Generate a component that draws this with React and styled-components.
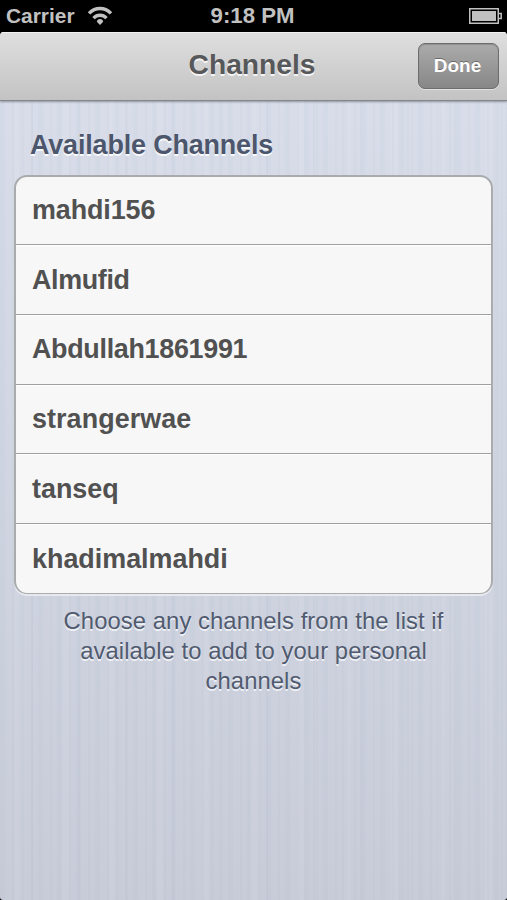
import React from "react";
import styled, { createGlobalStyle } from "styled-components";

const GlobalStyle = createGlobalStyle`
  * {
    box-sizing: border-box;
  }

  body {
    margin: 0;
    background: #000;
    font-family: "Liberation Sans", Arial, sans-serif;
  }
`;

const Screen = styled.div`
  height: 900px;
  overflow: hidden;
  background: #000;
`;

const StatusBar = styled.div`
  height: 32px;
  padding: 0 5px 0 6px;
  display: grid;
  grid-template-columns: 1fr auto 1fr;
  align-items: center;
  color: #c1c1c1;
`;

const StatusLeft = styled.div`
  display: flex;
  align-items: center;
  gap: 12px;
`;

const StatusText = styled.span`
  font-size: ${props => props.$size || "22.2px"};
  font-weight: bold;
  line-height: 32px;
  white-space: nowrap;
`;

const Time = styled(StatusText)`
  margin-right: 3px;
`;

const BatteryIcon = styled.svg`
  justify-self: end;
  margin-bottom: 1px;
`;

const Page = styled.div`
  height: 868px;
  border-radius: 4px 4px 3px 3px;
  overflow: hidden;
  background: repeating-linear-gradient(
      90deg,
      rgba(110, 125, 165, 0.03) 0 5px,
      transparent 5px 12px,
      rgba(110, 120, 150, 0.03) 12px 14px,
      transparent 14px 19px
    ),
    repeating-linear-gradient(
      90deg,
      transparent 0 15px,
      rgba(255, 255, 255, 0.05) 15px 22px,
      transparent 22px 31px,
      rgba(100, 115, 145, 0.03) 31px 33px,
      transparent 33px 47px
    ),
    linear-gradient(#d8dde9 68px, #d5dae6 200px, #ced3df 560px, #c8ccd8 868px);
`;

const NavBar = styled.div`
  position: relative;
  height: 69px;
  padding: 0 8px;
  display: grid;
  grid-template-columns: 1fr auto 1fr;
  align-items: center;
  background: linear-gradient(#dfdfdf, #c3c3c3);
  border-bottom: 1px solid #85868a;
  box-shadow: inset 0 1px 0 #f2f2f2, 0 1px 2px rgba(70, 75, 90, 0.5);
`;

const Title = styled.h1`
  grid-column: 2;
  margin: 0;
  padding: 0 3px 4px 0;
  font-size: 28.2px;
  line-height: 34px;
  color: #57585a;
  text-shadow: 0 1.5px 0 rgba(255, 255, 255, 0.8);
`;

const DoneButton = styled.button`
  justify-self: end;
  width: 81px;
  height: 46px;
  margin-bottom: 1px;
  padding: 1px 2px 0 0;
  border: 1.5px solid #6d6d6d;
  border-radius: 7px;
  background: linear-gradient(#ababab, #878787);
  box-shadow: inset 0 1px 1px rgba(80, 80, 80, 0.3), 0 1px 0 rgba(255, 255, 255, 0.45);
  color: #fff;
  font-family: inherit;
  font-size: 19px;
  font-weight: bold;
  text-shadow: 0 -1.5px 0 rgba(0, 0, 0, 0.35);
`;

const SectionTitle = styled.h2`
  margin: 0;
  padding: 28px 30px 0;
  height: 74px;
  font-size: 26.9px;
  line-height: 32px;
  letter-spacing: -0.14px;
  color: #4c566c;
  text-shadow: 0 1.5px 0 rgba(255, 255, 255, 0.85);
`;

const List = styled.ul`
  margin: 0 14px;
  padding: 0;
  height: 419px;
  display: flex;
  flex-direction: column;
  list-style: none;
  background: #f7f7f7;
  border: 2px solid #a9abad;
  border-bottom-width: 1px;
  border-radius: 13px;
  box-shadow: 0 2px 0 rgba(255, 255, 255, 0.5);
  overflow: hidden;
`;

const Row = styled.li`
  height: 69.7px;
  flex: none;
  display: flex;
  align-items: center;
  padding: 1px 16px 0;
  font-size: 26.9px;
  font-weight: bold;
  letter-spacing: ${props => props.$tracking || 0}px;
  color: #515151;

  &:first-child {
    height: 68.3px;
    padding-top: 0;
  }

  &:not(:last-child) {
    border-bottom: 1.5px solid #a0a0a0;
  }

  & + & {
    box-shadow: inset 0 1px 0 #fff;
  }
`;

const Footer = styled.p`
  margin: 12px 50px 0;
  text-align: center;
  font-size: 23.8px;
  line-height: 30px;
  letter-spacing: 0.08px;
  color: #515b70;
  text-shadow: 0 1.5px 0 rgba(255, 255, 255, 0.7);
`;

const channels = [
  { name: "mahdi156", tracking: -0.1 },
  { name: "Almufid", tracking: -0.35 },
  { name: "Abdullah1861991", tracking: -0.3 },
  { name: "strangerwae", tracking: 0.08 },
  { name: "tanseq" },
  { name: "khadimalmahdi" }
];

const Wifi = () => (
  <svg width="26" height="20" viewBox="0 0 26 20">
    <g fill="none" stroke="#c1c1c1" strokeWidth="3.4">
      <path d="M2 7.4C8.3 .9 17.7 .9 24 7.4" />
      <path d="M6.5 12.2C10.2 8.3 15.8 8.3 19.5 12.2" />
    </g>
    <path d="M13 19L9.8 15.8Q10.4 13 13 13T16.2 15.8Z" fill="#c1c1c1" />
  </svg>
);

const Battery = () => (
  <BatteryIcon width="33" height="16" viewBox="0 0 33 16">
    <rect x="0.75" y="0.75" width="28.5" height="14.5" fill="none" stroke="#c1c1c1" strokeWidth="1.5" />
    <rect x="3" y="3" width="24" height="10" fill="#c1c1c1" />
    <path d="M29.5 5.5H32.2V10.5H29.5" fill="none" stroke="#c1c1c1" strokeWidth="1.5" />
  </BatteryIcon>
);

const App = () => (
  <Screen>
    <GlobalStyle />
    <StatusBar>
      <StatusLeft>
        <StatusText $size="20.9px">Carrier</StatusText>
        <Wifi />
      </StatusLeft>
      <Time>9:18 PM</Time>
      <Battery />
    </StatusBar>
    <Page>
      <NavBar>
        <Title>Channels</Title>
        <DoneButton type="button">Done</DoneButton>
      </NavBar>
      <SectionTitle>Available Channels</SectionTitle>
      <List>
        {channels.map(({ name, tracking }) => (
          <Row key={name} $tracking={tracking}>
            {name}
          </Row>
        ))}
      </List>
      <Footer>
        Choose any channels from the list if available to add to your personal
        channels
      </Footer>
    </Page>
  </Screen>
);

export default App;
